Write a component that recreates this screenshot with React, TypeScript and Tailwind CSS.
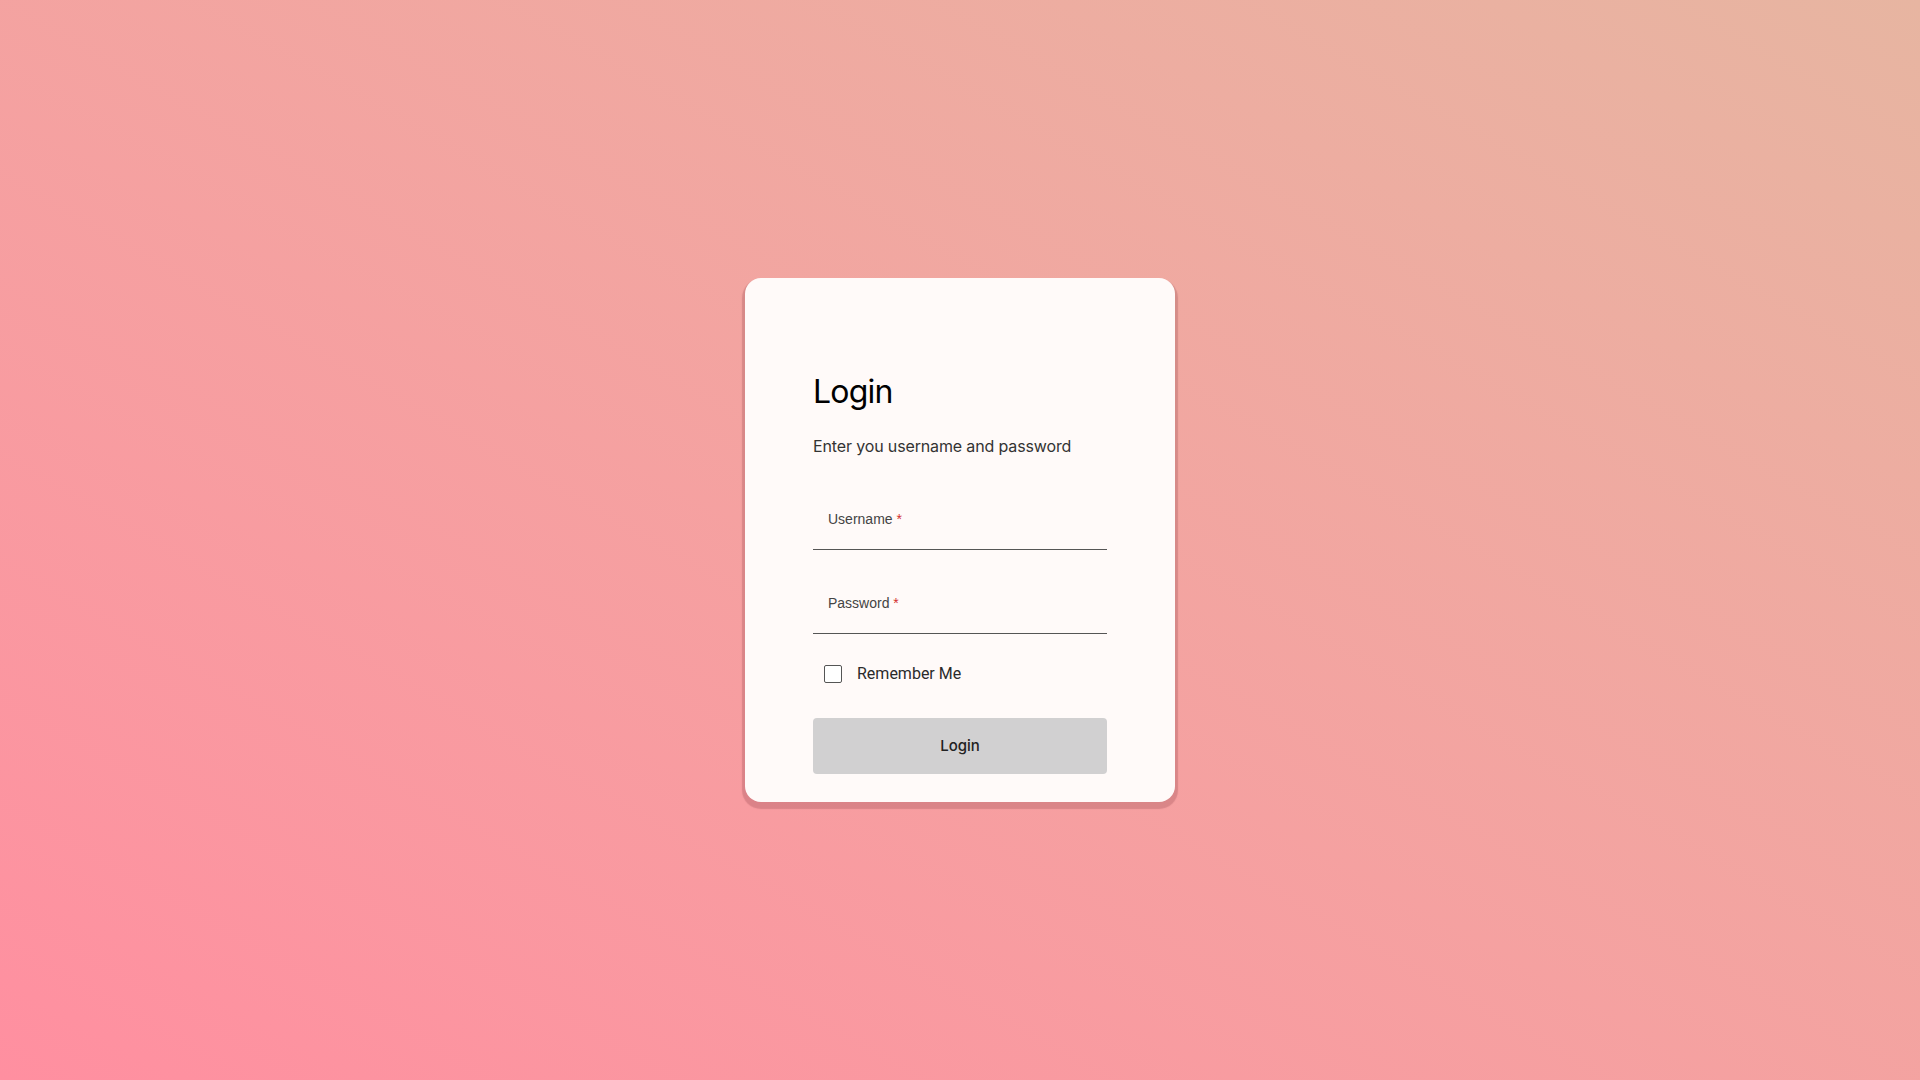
export default function App() {
  return (
    <div className="min-h-screen w-full flex items-center justify-center bg-gradient-to-tr from-[#ff8fa0] to-[#e7b5a1]">
      <div className="w-[430px] h-[524px] bg-[#fffaf9] rounded-[16px] shadow-[0_4px_1px_3px_rgba(120,40,50,0.22)] px-[68px] pt-[94px] pb-[28px] flex flex-col">
        <h1 className="text-[32px] leading-[40px] tracking-[-0.8px] font-normal text-black font-['Inter',sans-serif]">Login</h1>
        <p className="mt-[22px] text-[16px] leading-[24px] tracking-[-0.14px] text-[#333] font-['Inter',sans-serif]">
          Enter you username and password
        </p>

        {/* Username */}
        <div className="mt-[51px] border-b border-[#555] pb-[20px]">
          <label className="block pl-[15px] text-[14px] leading-[20px] text-[#444] font-['Liberation_Sans',Arial,sans-serif]">
            Username <span className="text-[#d32f2f]">*</span>
          </label>
        </div>

        {/* Password */}
        <div className="mt-[43px] border-b border-[#555] pb-[20px]">
          <label className="block pl-[15px] text-[14px] leading-[20px] text-[#444] font-['Liberation_Sans',Arial,sans-serif]">
            Password <span className="text-[#d32f2f]">*</span>
          </label>
        </div>

        {/* Remember me */}
        <div className="mt-[28px] h-[24px] flex items-center pl-[11px]">
          <span className="w-[18px] h-[18px] rounded-[2px] border-[1.5px] border-[#555] bg-white" />
          <span className="ml-[15px] text-[16px] leading-[24px] text-[#2b2b2b] font-['Roboto',sans-serif]">Remember Me</span>
        </div>

        <button className="mt-[32px] h-[57px] w-full rounded-[4px] bg-[#d1d0d1] text-[15px] font-medium text-[#222] font-['Inter',sans-serif]">
          Login
        </button>
      </div>
    </div>
  )
}
